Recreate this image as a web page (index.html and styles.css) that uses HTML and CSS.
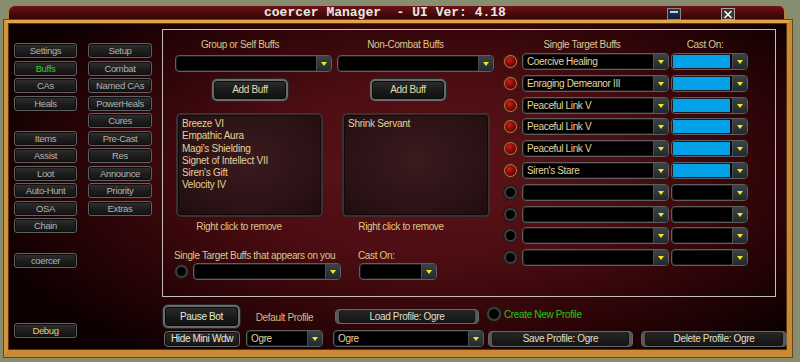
FILE: index.html
```html
<!DOCTYPE html>
<html>
<head>
<meta charset="utf-8">
<link rel="stylesheet" href="styles.css">
</head>
<body>
<div class="window">
  <div class="titlebar">
    <span class="title">coercer Manager  - UI Ver: 4.18</span>
    <span class="tb-btn tb-min"><i></i></span>
    <span class="tb-btn tb-close"><svg width="10" height="9" viewBox="0 0 10 9"><path d="M1.5 1 L8.5 8 M8.5 1 L1.5 8" stroke="#f4f4f4" stroke-width="1.7" fill="none"/></svg></span>
  </div>
  <div class="panel">
    <nav class="nav">
      <div class="nb">Settings</div><div class="nb">Setup</div>
      <div class="nb on">Buffs</div><div class="nb">Combat</div>
      <div class="nb">CAs</div><div class="nb">Named CAs</div>
      <div class="nb">Heals</div><div class="nb">PowerHeals</div>
      <div class="nb-gap"></div><div class="nb">Cures</div>
      <div class="nb">Items</div><div class="nb">Pre-Cast</div>
      <div class="nb">Assist</div><div class="nb">Res</div>
      <div class="nb">Loot</div><div class="nb">Announce</div>
      <div class="nb">Auto-Hunt</div><div class="nb">Priority</div>
      <div class="nb">OSA</div><div class="nb">Extras</div>
      <div class="nb">Chain</div>
      <div class="nb row13">coercer</div>
      <div class="nb dbg row17">Debug</div>
    </nav>
    <div class="content">
      <div class="box">
        <div class="mid">
          <div class="pair">
            <div class="col col-a">
              <div class="hdr">Group or Self Buffs</div>
              <div class="dd dd-wide"><span class="val"></span><span class="arr"><b></b></span></div>
              <div class="bigbtn add">Add Buff</div>
              <div class="list">
                <div>Breeze VI</div>
                <div>Empathic Aura</div>
                <div>Magi's Shielding</div>
                <div>Signet of Intellect VII</div>
                <div>Siren's Gift</div>
                <div>Velocity IV</div>
              </div>
              <div class="hint">Right click to remove</div>
            </div>
            <div class="col col-b">
              <div class="hdr">Non-Combat Buffs</div>
              <div class="dd dd-wide"><span class="val"></span><span class="arr"><b></b></span></div>
              <div class="bigbtn add">Add Buff</div>
              <div class="list">
                <div>Shrink Servant</div>
              </div>
              <div class="hint">Right click to remove</div>
            </div>
          </div>
          <div class="self">
            <div class="self-left">
              <div class="hdr2">Single Target Buffs that appears on you</div>
              <div class="self-row">
                <span class="radio"></span>
                <div class="dd dd-self"><span class="val"></span><span class="arr"><b></b></span></div>
              </div>
            </div>
            <div class="self-right">
              <div class="hdr2">Cast On:</div>
              <div class="dd dd-selfcast"><span class="val"></span><span class="arr"><b></b></span></div>
            </div>
          </div>
        </div>
        <div class="targets">
          <div class="t-hdr"><span class="t-h1">Single Target Buffs</span><span class="t-h2">Cast On:</span></div>
          <div class="t-rows">
            <div class="t-row"><span class="radio red"></span><div class="dd dd-buff"><span class="val">Coercive Healing</span><span class="arr"><b></b></span></div><div class="dd dd-cast"><span class="val"><i class="blue"></i></span><span class="arr"><b></b></span></div></div>
            <div class="t-row"><span class="radio red"></span><div class="dd dd-buff"><span class="val">Enraging Demeanor III</span><span class="arr"><b></b></span></div><div class="dd dd-cast"><span class="val"><i class="blue"></i></span><span class="arr"><b></b></span></div></div>
            <div class="t-row"><span class="radio red"></span><div class="dd dd-buff"><span class="val">Peaceful Link V</span><span class="arr"><b></b></span></div><div class="dd dd-cast"><span class="val"><i class="blue"></i></span><span class="arr"><b></b></span></div></div>
            <div class="t-row"><span class="radio red"></span><div class="dd dd-buff"><span class="val">Peaceful Link V</span><span class="arr"><b></b></span></div><div class="dd dd-cast"><span class="val"><i class="blue"></i></span><span class="arr"><b></b></span></div></div>
            <div class="t-row"><span class="radio red"></span><div class="dd dd-buff"><span class="val">Peaceful Link V</span><span class="arr"><b></b></span></div><div class="dd dd-cast"><span class="val"><i class="blue"></i></span><span class="arr"><b></b></span></div></div>
            <div class="t-row"><span class="radio red"></span><div class="dd dd-buff"><span class="val">Siren's Stare</span><span class="arr"><b></b></span></div><div class="dd dd-cast"><span class="val"><i class="blue"></i></span><span class="arr"><b></b></span></div></div>
            <div class="t-row"><span class="radio"></span><div class="dd dd-buff"><span class="val"></span><span class="arr"><b></b></span></div><div class="dd dd-cast"><span class="val"></span><span class="arr"><b></b></span></div></div>
            <div class="t-row"><span class="radio"></span><div class="dd dd-buff"><span class="val"></span><span class="arr"><b></b></span></div><div class="dd dd-cast"><span class="val"></span><span class="arr"><b></b></span></div></div>
            <div class="t-row"><span class="radio"></span><div class="dd dd-buff"><span class="val"></span><span class="arr"><b></b></span></div><div class="dd dd-cast"><span class="val"></span><span class="arr"><b></b></span></div></div>
            <div class="t-row"><span class="radio"></span><div class="dd dd-buff"><span class="val"></span><span class="arr"><b></b></span></div><div class="dd dd-cast"><span class="val"></span><span class="arr"><b></b></span></div></div>
          </div>
        </div>
      </div>
      <div class="bottom">
        <div class="bc bc1">
          <div class="bigbtn pause">Pause Bot</div>
          <div class="smbtn hide">Hide Mini Wdw</div>
        </div>
        <div class="bc bc2">
          <div class="lbl">Default Profile</div>
          <div class="dd dd-prof"><span class="val">Ogre</span><span class="arr"><b></b></span></div>
        </div>
        <div class="bc bc3">
          <div class="pbtn load">Load Profile: Ogre</div>
          <div class="dd dd-prof2"><span class="val">Ogre</span><span class="arr"><b></b></span></div>
        </div>
        <div class="bc bc4">
          <div class="newprof"><span class="radio"></span><span class="green">Create New Profile</span></div>
          <div class="pbtn save">Save Profile: Ogre</div>
        </div>
        <div class="bc bc5">
          <div class="pbtn del">Delete Profile: Ogre</div>
        </div>
      </div>
    </div>
  </div>
</div>
</body>
</html>
```

FILE: styles.css
```css
html, body {
  margin: 0;
  padding: 0;
}
body {
  width: 800px;
  height: 362px;
  overflow: hidden;
  background: #878d6f;
  font-family: "Liberation Sans", Arial, sans-serif;
  font-size: 10px;
  letter-spacing: -0.35px;
  color: #d9c78e;
}
.window {
  margin: 5px 0 0 4px;
  width: 788px;
}
.titlebar {
  box-sizing: border-box;
  margin-left: 4px;
  width: 777px;
  height: 15px;
  border: 1px solid #b87e30;
  border-bottom: none;
  border-radius: 7px 6px 0 0;
  background: linear-gradient(#6e1318, #440709 65%, #2e0306);
  display: flex;
  align-items: flex-start;
}
.title {
  margin-left: 255px;
  font-family: "Liberation Mono", "DejaVu Sans Mono", monospace;
  font-weight: bold;
  font-size: 13px;
  line-height: 14px;
  letter-spacing: 0;
  color: #ece8e0;
  white-space: pre;
}
.tb-btn {
  box-sizing: border-box;
  width: 14px;
  height: 12px;
  margin-top: 2px;
  display: flex;
}
.tb-min {
  margin-left: 161px;
  background: linear-gradient(#24375e, #101c38);
  border: 1px solid #8c8670;
  justify-content: center;
  padding-top: 2px;
}
.tb-min i {
  display: block;
  width: 8px;
  height: 2px;
  background: #c4ccdc;
}
.tb-close {
  margin-left: 40px;
  background: #3c3434;
  border: 1px solid #a8a296;
  align-items: center;
  justify-content: center;
}

.panel {
  box-sizing: border-box;
  width: 788px;
  height: 337px;
  border-style: solid;
  border-width: 3px 5px 7px 4px;
  border-color: #e0a545 #c88a34 #c88a34 #d4913a;
  box-shadow: inset 0 0 0 1px #5c3512, 0 0 0 1px #6a4616;
  background:
    radial-gradient(ellipse 62% 70% at 55% 45%, #5c1419 0%, #4c0d12 40%, #2c0407 72%, #0c0000 100%);
  display: flex;
  align-items: flex-start;
  padding: 6px 0 0 6px;
}

/* left nav */
.nav {
  display: grid;
  grid-template-columns: 63px 64px;
  column-gap: 11px;
  grid-auto-rows: 15px;
  row-gap: 2.5px;
  width: 138px;
  margin-top: 14px;
}
.nb {
  box-sizing: border-box;
  border: 1px solid #626262;
  border-radius: 3px;
  background: linear-gradient(#303030, #1b1b1b 60%, #151515);
  box-shadow: inset 0 0 0 1px #0e0e0e;
  color: #b2b2b2;
  font-size: 9.5px;
  line-height: 13px;
  text-align: center;
  white-space: nowrap;
}
.nb.on { color: #22dc22; }
.nb.dbg { color: #e2d06a; }
.row13 { grid-row: 13; grid-column: 1; }
.row17 { grid-row: 17; grid-column: 1; }

.content {
  margin-left: 10px;
  display: flex;
  flex-direction: column;
}
.box {
  box-sizing: border-box;
  width: 614px;
  height: 268px;
  border: 1px solid #c4beb8;
  display: flex;
  padding: 9px 0 0 12px;
}

/* middle */
.mid {
  width: 319px;
  display: flex;
  flex-direction: column;
}
.pair {
  display: flex;
  gap: 5px;
}
.col {
  width: 157px;
  display: flex;
  flex-direction: column;
}
.hdr {
  height: 12px;
  line-height: 12px;
  text-align: center;
  white-space: nowrap;
}
.col-a .hdr { padding-right: 27px; }
.col-b .hdr { padding-right: 20px; }

.dd {
  box-sizing: border-box;
  height: 17px;
  display: flex;
  border: 1px solid #5e5e5e;
  border-radius: 4px;
  background: #000;
  box-shadow: inset 0 0 0 1px #1c1c1c;
  overflow: hidden;
}
.dd .val {
  flex: 1;
  min-width: 0;
  display: flex;
  align-items: center;
  padding-left: 4px;
  color: #e2d4a0;
  font-size: 10px;
  white-space: nowrap;
  overflow: hidden;
}
.dd .arr {
  width: 15px;
  flex: none;
  box-sizing: border-box;
  border-left: 1px solid #4a4f50;
  border-radius: 0 3px 3px 0;
  background: linear-gradient(#3a4446, #212a2c);
  display: flex;
  align-items: center;
  justify-content: center;
}
.dd .arr b {
  display: block;
  width: 0;
  height: 0;
  border-left: 3.5px solid transparent;
  border-right: 3.5px solid transparent;
  border-top: 4px solid #f6e620;
  margin-top: 1px;
}
.dd-wide {
  margin-top: 4px;
  width: 157px;
}

.bigbtn {
  box-sizing: border-box;
  border: 2px solid #6a6a6a;
  border-radius: 5px;
  background: linear-gradient(#2c2c2c, #181818 60%, #121212);
  box-shadow: inset 0 0 0 1px #0c0c0c, 0 0 0 1px #262626;
  color: #e4daae;
  text-align: center;
}
.add {
  margin-top: 7px;
  width: 76px;
  height: 22px;
  line-height: 18px;
}
.col-a .add { margin-left: 37px; }
.col-b .add { margin-left: 33px; }

.list {
  box-sizing: border-box;
  margin-top: 12px;
  height: 104px;
  border: 2px solid #383233;
  border-radius: 5px;
  background: radial-gradient(ellipse at 50% 45%, #3a1a1e, #2a1214 70%, #1e0b0d);
  box-shadow: inset 0 0 0 1px #150709;
  padding: 3px 0 0 4px;
  color: #e2d29a;
  line-height: 12.3px;
  letter-spacing: -0.25px;
  white-space: nowrap;
}
.col-a .list { margin-left: 1px; width: 147px; }
.col-b .list { margin-left: 5px; width: 148px; }

.hint {
  margin-top: 4px;
  width: 128px;
  height: 12px;
  line-height: 12px;
  text-align: center;
  white-space: nowrap;
}

.self {
  margin-top: 17px;
  display: flex;
}
.self-left {
  margin-left: -1px;
  display: flex;
  flex-direction: column;
}
.hdr2 {
  height: 12px;
  line-height: 12px;
  white-space: nowrap;
}
.self-row {
  margin-top: 1px;
  margin-left: 1px;
  display: flex;
  align-items: center;
  gap: 5px;
}
.dd-self { width: 148px; }
.self-right {
  margin-left: 17px;
  display: flex;
  flex-direction: column;
}
.dd-selfcast {
  margin-top: 1px;
  margin-left: 1px;
  width: 78px;
}

.radio {
  box-sizing: border-box;
  width: 13px;
  height: 13px;
  flex: none;
  border-radius: 50%;
  background: #000;
  border: 2px solid #3e3e3e;
  box-shadow: 0 0 0 1px #1a1a1a;
}
.radio.red {
  background: radial-gradient(circle at 40% 35%, #c42222 0%, #8c0707 45%, #4a0000 90%);
  border: 1.5px solid #b08a42;
  box-shadow: 0 0 0 1px #3a2808;
}

/* right targets */
.targets {
  margin-left: 10px;
  width: 244px;
  display: flex;
  flex-direction: column;
}
.t-hdr {
  height: 12px;
  line-height: 12px;
  display: flex;
  white-space: nowrap;
}
.t-h1 { width: 156px; text-align: center; }
.t-h2 { width: 68px; margin-left: 11px; text-align: center; }
.t-rows {
  margin-top: 2px;
  display: flex;
  flex-direction: column;
  gap: 4.8px;
}
.t-row {
  height: 17px;
  display: flex;
  align-items: center;
}
.t-row .radio { margin-right: 5px; }
.dd-buff { width: 147px; }
.dd-cast { width: 77px; margin-left: 2px; }
.dd-cast .val { padding: 1px 2px 1px 1px; align-items: stretch; }
.blue {
  display: block;
  flex: 1;
  background: #03a2e8;
}

/* bottom */
.bottom {
  margin-top: 8px;
  margin-left: 1px;
  height: 42px;
  display: flex;
}
.bc {
  display: flex;
  flex-direction: column;
  height: 42px;
}
.bc1 { width: 77px; }
.pause {
  width: 77px;
  height: 23px;
  line-height: 19px;
  color: #e8e8dc;
}
.smbtn {
  box-sizing: border-box;
  border: 1px solid #707070;
  border-radius: 4px;
  background: linear-gradient(#2c2c2c, #161616);
  box-shadow: inset 0 0 0 1px #0c0c0c;
  color: #e8e8dc;
  text-align: center;
  white-space: nowrap;
}
.hide {
  margin-top: 3px;
  margin-left: 1px;
  width: 76px;
  height: 16px;
  line-height: 14px;
}
.bc2 { width: 77px; margin-left: 6px; }
.lbl {
  margin-top: 7px;
  height: 12px;
  line-height: 12px;
  text-align: center;
  white-space: nowrap;
  color: #d4bb80;
}
.dd-prof { margin-top: auto; width: 77px; }
.bc3 { width: 151px; margin-left: 10px; }
.pbtn {
  box-sizing: border-box;
  border: 1px solid #666;
  border-radius: 4px;
  background: linear-gradient(#262626, #141414);
  box-shadow: inset 3px 0 0 #585858, inset -3px 0 0 #585858, inset 4px 0 0 #151515, inset -4px 0 0 #151515;
  color: #e4dec0;
  text-align: center;
  white-space: nowrap;
}
.load {
  margin-top: 4px;
  margin-left: 2px;
  width: 144px;
  height: 15px;
  line-height: 13px;
}
.dd-prof2 { margin-top: auto; width: 151px; }
.bc4 { width: 146px; margin-left: 3px; }
.newprof {
  margin-top: 2px;
  height: 14px;
  display: flex;
  align-items: center;
  gap: 3px;
}
.newprof .radio { width: 14px; height: 14px; }
.green { color: #1ec81e; white-space: nowrap; }
.save {
  margin-top: auto;
  margin-left: 1px;
  width: 145px;
  height: 16px;
  line-height: 14px;
}
.bc5 { width: 146px; margin-left: 8px; }
.del {
  margin-top: auto;
  width: 146px;
  height: 16px;
  line-height: 14px;
}
```
